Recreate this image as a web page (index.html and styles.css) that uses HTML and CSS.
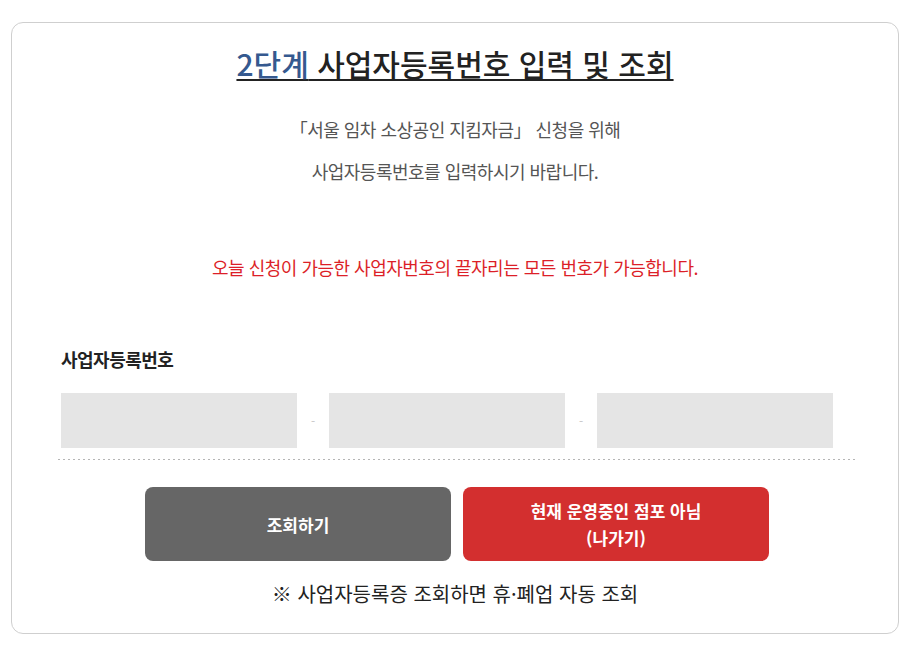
FILE: index.html
```html
<!DOCTYPE html>
<html lang="ko">
<head>
<meta charset="utf-8">
<title>2단계 사업자등록번호 입력 및 조회</title>
<link rel="stylesheet" href="styles.css">
</head>
<body>
<div class="card">
  <h1 class="title"><span class="step">2단계</span> 사업자등록번호 입력 및 조회</h1>
  <div class="desc">
    <p>「서울 임차 소상공인 지킴자금」 신청을 위해</p>
    <p>사업자등록번호를 입력하시기 바랍니다.</p>
  </div>
  <p class="notice">오늘 신청이 가능한 사업자번호의 끝자리는 모든 번호가 가능합니다.</p>
  <div class="form">
    <div class="label">사업자등록번호</div>
    <div class="inputs">
      <input class="field" type="text" aria-label="사업자등록번호 앞자리">
      <span class="sep">-</span>
      <input class="field" type="text" aria-label="사업자등록번호 가운데자리">
      <span class="sep">-</span>
      <input class="field" type="text" aria-label="사업자등록번호 끝자리">
    </div>
    <div class="dots"></div>
  </div>
  <div class="buttons">
    <button class="btn btn-gray">조회하기</button>
    <button class="btn btn-red">현재 운영중인 점포 아님<br>(나가기)</button>
  </div>
  <p class="foot">※ 사업자등록증 조회하면 휴·폐업 자동 조회</p>
</div>
</body>
</html>
```
FILE: styles.css
```css
html, body {
  margin: 0;
  padding: 0;
  background: #fff;
}
body {
  padding: 22px 17px 0 11px;
  font-family: "Noto Sans CJK KR", "Noto Sans", sans-serif;
  color: #222;
}
.card {
  border: 1px solid #cfcfcf;
  border-radius: 12px;
  height: 612px;
  box-sizing: border-box;
  padding-top: 22px;
  display: flex;
  flex-direction: column;
  align-items: center;
}
.title {
  margin: 0;
  font-size: 30px;
  line-height: 36px;
  font-weight: 500;
  color: #222;
  text-decoration: underline;
  text-decoration-thickness: 2px;
  text-underline-offset: 3px;
  letter-spacing: 0;
}
.step {
  color: #35598f;
}
.desc {
  margin-top: 27px;
  text-align: center;
}
.desc p {
  margin: 0;
  font-size: 18px;
  line-height: 42px;
  color: #555;
  letter-spacing: -0.5px;
}
.notice {
  margin: 54px 0 0;
  font-size: 18px;
  line-height: 42px;
  color: #dc1f28;
  letter-spacing: -0.5px;
}
.form {
  align-self: stretch;
  margin: 59px 42px 0 46px;
}
.label {
  padding-left: 3px;
  font-size: 18px;
  line-height: 24px;
  font-weight: 700;
  letter-spacing: -0.5px;
  color: #222;
}
.inputs {
  margin-top: 22px;
  padding-left: 3px;
  display: flex;
  align-items: center;
}
.field {
  width: 236px;
  height: 55px;
  box-sizing: border-box;
  border: none;
  background: #e5e5e5;
  margin: 0;
  padding: 0 10px;
}
.sep {
  width: 32px;
  text-align: center;
  color: #c8c8c8;
  font-size: 12px;
}
.dots {
  margin-top: 11px;
  height: 1px;
  background: repeating-linear-gradient(to right, #b5b5b5 0 2px, transparent 2px 5px);
}
.buttons {
  margin-top: 27px;
  margin-left: 4px;
  display: flex;
  gap: 12px;
}
.btn {
  width: 306px;
  height: 74px;
  border: none;
  border-radius: 8px;
  color: #fff;
  font-family: inherit;
  font-size: 17px;
  font-weight: 700;
  line-height: 27px;
  letter-spacing: 0;
  padding: 0;
}
.btn-gray {
  background: #666666;
}
.btn-red {
  background: #d32f2f;
}
.foot {
  margin: 19px 0 0;
  font-size: 20px;
  line-height: 28px;
  color: #222;
  letter-spacing: 0;
}
```
